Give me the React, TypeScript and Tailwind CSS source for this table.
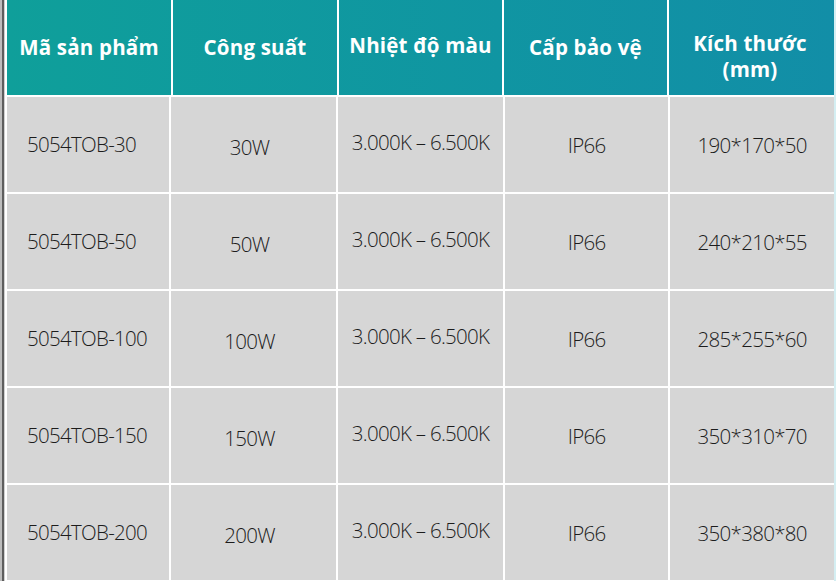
import React from "react";

const rows = [
  ["5054TOB-30", "30W", "3.000K – 6.500K", "IP66", "190*170*50"],
  ["5054TOB-50", "50W", "3.000K – 6.500K", "IP66", "240*210*55"],
  ["5054TOB-100", "100W", "3.000K – 6.500K", "IP66", "285*255*60"],
  ["5054TOB-150", "150W", "3.000K – 6.500K", "IP66", "350*310*70"],
  ["5054TOB-200", "200W", "3.000K – 6.500K", "IP66", "350*380*80"],
];

const widths = ["w-[164px]", "w-[166px]", "w-[165px]", "w-[165px]", "w-[164px]"];

export default function App() {
  return (
    <div
      className="w-[836px] h-[581px] overflow-hidden bg-white flex"
      style={{ fontFamily: '"Open Sans", "Liberation Sans", sans-serif' }}
    >
      <div className="w-[2px] h-full bg-[#bdbdbd]" />
      <div className="w-[2px] h-full bg-[#5e5e5e]" />
      <div className="w-[1px] h-full bg-[#d0d0d0]" />
      <div className="w-[2px] h-full bg-white" />
      <div className="w-[827px] flex flex-col gap-[2px]">
        <div className="h-[95px] flex bg-gradient-to-r from-[#0f9f9a] to-[#128ea7] text-white font-bold text-[20.5px] leading-[28px] tracking-[0.2px]">
          <div className={`${widths[0]} pt-[33px] text-center whitespace-nowrap`}>Mã sản phẩm</div>
          <div className={`${widths[1]} border-l-2 border-white pt-[33px] text-center`}>Công suất</div>
          <div className={`${widths[2]} border-l-2 border-white pt-[31px] text-center whitespace-nowrap`}>Nhiệt độ màu</div>
          <div className={`${widths[3]} border-l-2 border-white pt-[33px] text-center`}>Cấp bảo vệ</div>
          <div className={`${widths[4]} border-l-2 border-white pt-[31px] text-center flex flex-col items-center gap-[1px]`}>
            <span className="leading-[25px]">Kích thước</span>
            <span className="leading-[25px]">(mm)</span>
          </div>
        </div>
        {rows.map((r, i) => (
          <div key={i} className="h-[95px] flex gap-[2px] text-[20.5px] tracking-[-0.7px] font-light text-[#1c1c1c]">
            <div className="w-[162px] bg-[#d6d6d6] flex items-center pl-[20px]">{r[0]}</div>
            <div className="w-[166px] bg-[#d6d6d6] flex items-center justify-center pt-[6px] pr-[8px]">{r[1]}</div>
            <div className="w-[165px] bg-[#d6d6d6] flex items-center justify-center pb-[4px] whitespace-nowrap">{r[2]}</div>
            <div className="w-[164px] bg-[#d6d6d6] flex items-center justify-center pt-[2px]">{r[3]}</div>
            <div className="w-[164px] bg-[#d6d6d6] flex items-center justify-center pt-[2px]">{r[4]}</div>
          </div>
        ))}
      </div>
      <div className="w-[2px] h-full bg-[#d4eef2]" />
    </div>
  );
}
